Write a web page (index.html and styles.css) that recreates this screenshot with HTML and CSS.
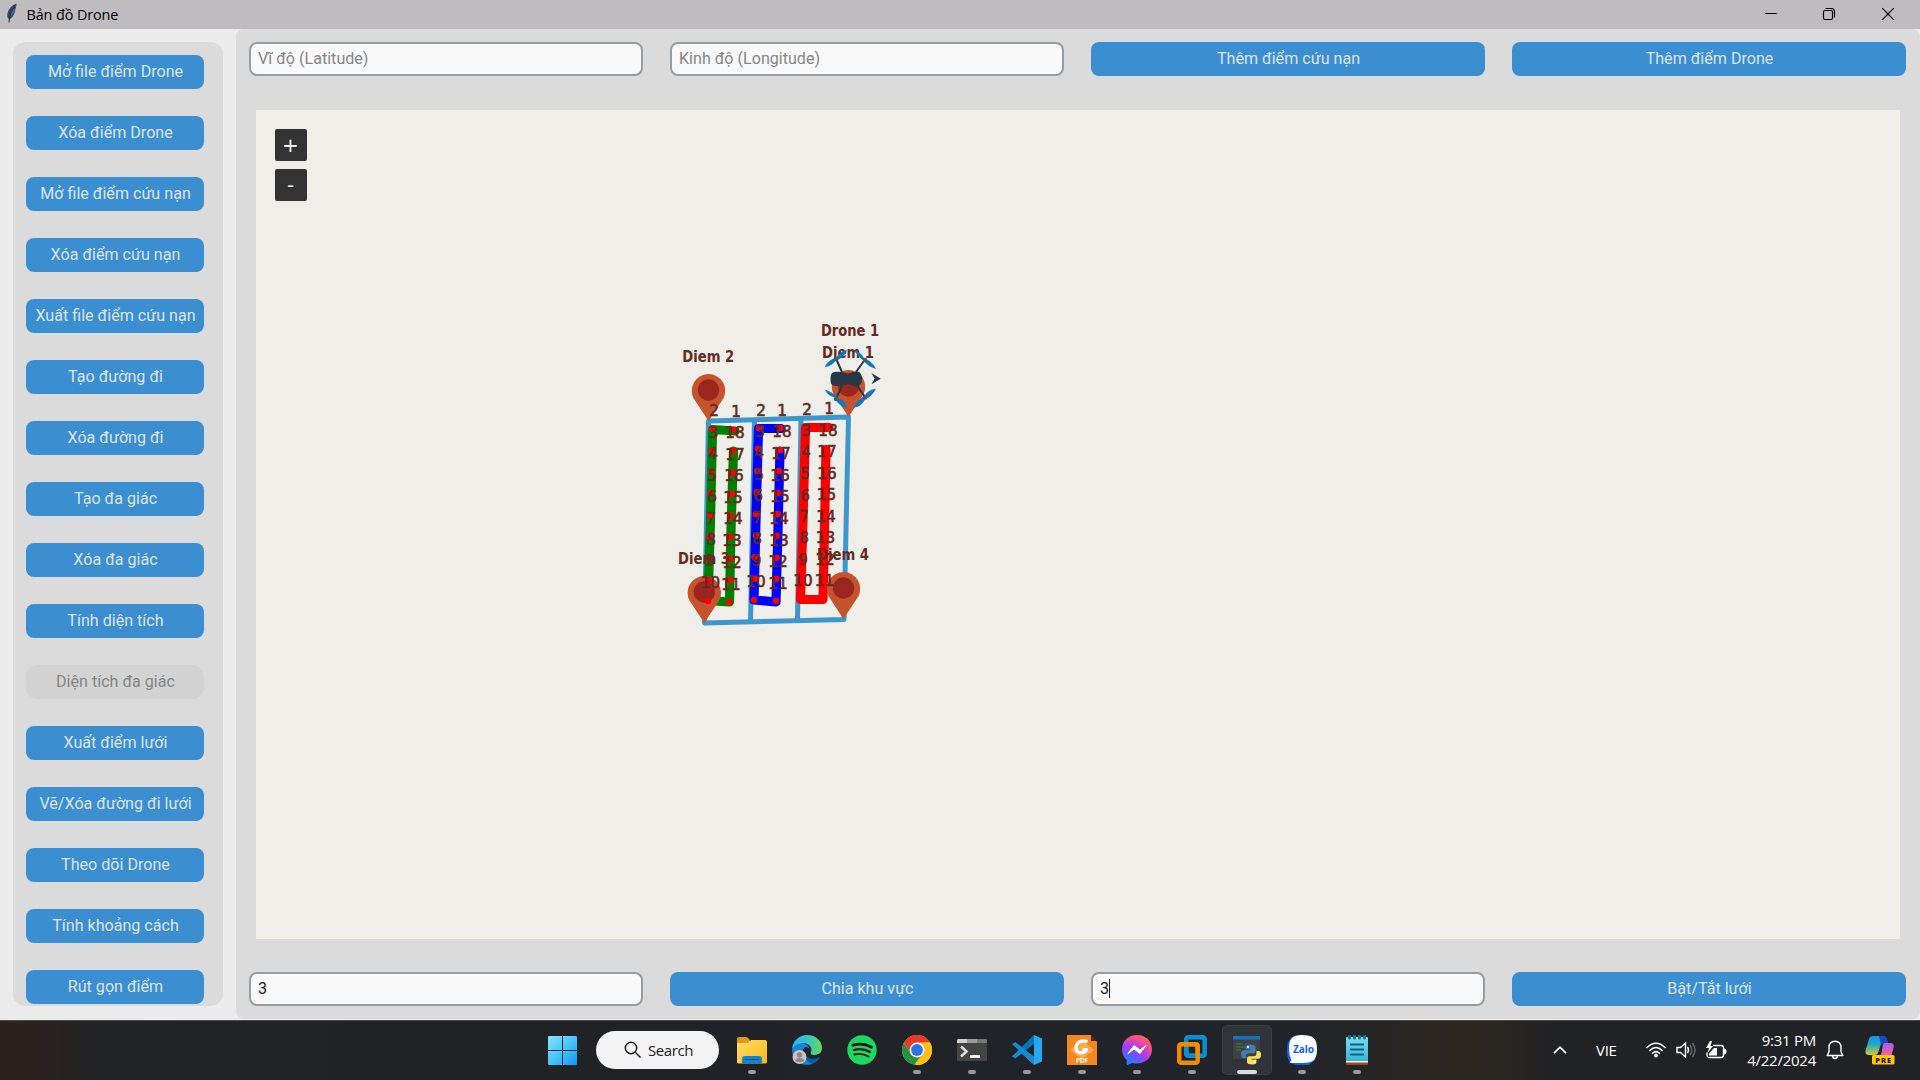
FILE: index.html
```html
<!DOCTYPE html>
<html lang="vi">
<head>
<meta charset="utf-8">
<title>Bản đồ Drone</title>
<link rel="stylesheet" href="styles.css">
</head>
<body>
<header class="titlebar">
  <svg class="feather" width="12" height="22" viewBox="0 0 12 22"><path d="M10.500.8C6.500 1.500 1.500 6.500 1.300 12.500c0 2 .8 3.500 2 3.800 3-1 5-5 5.800-8.500C9.800 5 10.500 3 10.500.8z" fill="#31455f"/><path d="M9.500 3C6 6 4 10 3.600 14.500 6.500 12 8.800 8 9.500 3z" fill="#4b78b5"/><path d="M8.800 4C5 8 3.500 13 3 19.500" stroke="#20242a" fill="none"/></svg>
  <span class="title">Bản đồ Drone</span>
  <div class="controls">
    <svg width="58" height="29" viewBox="0 0 58 29"><path d="M23 13.500h12" stroke="#000"/></svg>
    <svg width="58" height="29" viewBox="0 0 58 29"><g fill="none" stroke="#000" stroke-width="1.200"><rect x="23.500" y="10.500" width="9" height="9" rx="1.500"/><path d="M25.500 8.500h6a3 3 0 0 1 3 3v6"/></g></svg>
    <svg width="60" height="29" viewBox="0 0 60 29"><path d="M24.200 8.200l11.600 11.600M35.800 8.200L24.200 19.800" stroke="#000" stroke-width="1.200"/></svg>
  </div>
</header>
<div class="app">
  <nav class="sidebar">
    <button class="btn">Mở file điểm Drone</button>
    <button class="btn">Xóa điểm Drone</button>
    <button class="btn">Mở file điểm cứu nạn</button>
    <button class="btn">Xóa điểm cứu nạn</button>
    <button class="btn">Xuất file điểm cứu nạn</button>
    <button class="btn">Tạo đường đi</button>
    <button class="btn">Xóa đường đi</button>
    <button class="btn">Tạo đa giác</button>
    <button class="btn">Xóa đa giác</button>
    <button class="btn">Tính diện tích</button>
    <div class="btn area">Diện tích đa giác</div>
    <button class="btn">Xuất điểm lưới</button>
    <button class="btn">Vẽ/Xóa đường đi lưới</button>
    <button class="btn">Theo dõi Drone</button>
    <button class="btn">Tính khoảng cách</button>
    <button class="btn">Rút gọn điểm</button>
  </nav>
  <main class="panel">
    <div class="row">
      <div class="entry hint">Vĩ độ (Latitude)</div>
      <div class="entry hint">Kinh độ (Longitude)</div>
      <button class="btn">Thêm điểm cứu nạn</button>
      <button class="btn">Thêm điểm Drone</button>
    </div>
    <section class="map">
      <svg class="canvas" width="1644" height="829" viewBox="256 110 1644 829">
        <defs>
          <g id="pin"><path d="M0 0L-14.800-22.500A16.700 16.700 0 1 1 14.800-22.500z" fill="#c5542d"/><circle cy="-31" r="10.700" fill="#9b261e"/></g>
        </defs>
        <g class="zone"><path d="M708.500 421L848.500 417 844 619.500 704.500 623z"/><path d="M754.500 420L750.500 622M801 418.500L797.500 620"/></g>
        <path class="route green" d="M733.500 451L731 530 729.500 602 708 600.500 710.500 520 712.500 429.500 735 431"/>
        <path class="route blue" d="M780 451L778 530 776 602 754 600 756 520 758.500 428.500 781 428.500"/>
        <path class="route red" d="M826 449.500L824.500 530 823 599.500 800.500 599.500 803 520 805.500 427.500 829 427.500"/>
        <use href="#pin" x="708.500" y="421"/><use href="#pin" x="848.500" y="417"/><use href="#pin" x="704.300" y="623"/><use href="#pin" x="843.500" y="619"/>
        <path class="dots" d="M712.300 429h0M711.700 451h0M711 472.300h0M710.300 493.300h0M710 515h0M709.300 536.700h0M709 558.300h0M708.300 580h0M708 601h0M733.300 430h0M733 451h0M732.700 472.700h0M731.700 494h0M731 516h0M730.700 536.700h0M730 559h0M730 580h0M729 602h0M759 428h0M758 448.700h0M757.300 471h0M756.700 492.300h0M756 514h0M756 535.300h0M754.700 557h0M755 578.700h0M754 600h0M780.300 428h0M780 450h0M778.700 471h0M777.700 493h0M777.700 514h0M776.700 536h0M776.700 558h0M776 579h0M776 600.700h0M826.300 449h0M822.700 555h0"/>
        <g class="label">
          <text x="708.300" y="362" textLength="52" lengthAdjust="spacingAndGlyphs">Diem 2</text>
          <text x="850" y="336" textLength="58" lengthAdjust="spacingAndGlyphs">Drone 1</text>
          <text x="848" y="358" textLength="52" lengthAdjust="spacingAndGlyphs">Diem 1</text>
          <text x="704" y="564" textLength="52" lengthAdjust="spacingAndGlyphs">Diem 3</text>
          <text x="843" y="560" textLength="52" lengthAdjust="spacingAndGlyphs">Diem 4</text>
        </g>
        <g class="num">
          <text x="714" y="416">2</text><text x="713.500" y="438">3</text><text x="713" y="459">4</text><text x="712" y="481">5</text><text x="712" y="502">6</text><text x="711" y="523.500">7</text><text x="711" y="544.500">8</text><text x="710" y="566">9</text><text x="710.500" y="588">10</text>
          <text x="736" y="417">1</text><text x="735" y="438">18</text><text x="735" y="459.500">17</text><text x="734" y="481">16</text><text x="733" y="503">15</text><text x="733" y="524">14</text><text x="732" y="546">13</text><text x="732" y="567.500">12</text><text x="731" y="589.500">11</text>
          <text x="761" y="415.500">2</text><text x="760" y="436.500">3</text><text x="759" y="458">4</text><text x="759" y="479.500">5</text><text x="758" y="501">6</text><text x="757" y="522.500">7</text><text x="757" y="544">8</text><text x="756.500" y="566">9</text><text x="756" y="587">10</text>
          <text x="782" y="416">1</text><text x="782" y="437">18</text><text x="781" y="458.500">17</text><text x="780" y="480.500">16</text><text x="780" y="502">15</text><text x="779" y="523.500">14</text><text x="779" y="545.500">13</text><text x="778" y="567">12</text><text x="778" y="588.500">11</text>
          <text x="807" y="414.500">2</text><text x="806" y="436">3</text><text x="806" y="457">4</text><text x="805" y="478.500">5</text><text x="805" y="500.500">6</text><text x="804" y="521.500">7</text><text x="804" y="543">8</text><text x="803" y="565">9</text><text x="803" y="586">10</text>
          <text x="829" y="414">1</text><text x="828" y="435.500">18</text><text x="827" y="457">17</text><text x="827" y="479">16</text><text x="826.500" y="500">15</text><text x="826" y="521.500">14</text><text x="825.500" y="543">13</text><text x="825" y="565">12</text><text x="824.500" y="586">11</text>
        </g>
        <g class="drone">
          <path d="M836 358.500L842 372M865 359.500L856 372M836 398.500L843 384M865 397L856 384" stroke="#263745" stroke-width="2"/>
          <g fill="#0d78c2" stroke="#0d78c2" stroke-width=".5"><path d="M836 360Q833 365 825.300 367 826 362 836 357.500zM836 359Q839 352 846.500 350.500 846 355 836 361zM865 360Q861 352 854.500 350.500 857 355 864 361zM864.500 359Q872 361 875.500 368.500 869 367 864 361zM836 397.500Q828 396 825.300 390 831 391.500 837 397zM835.500 399Q839 406 847 407.500 845 401 837 397.500zM865 399Q862 406 854 407.500 857 401 864 396zM864 397.500Q867 390 875.500 389 873 395 866 399z"/></g>
          <g fill="#4a5a66"><circle cx="836" cy="359" r="2.200"/><circle cx="865" cy="360" r="2.200"/><circle cx="836" cy="399" r="2.200"/><circle cx="865" cy="397.500" r="2.200"/></g>
          <path d="M834 372Q842 371 846 373 849 374 853 372L858 371.500Q862 373 862 379 862 385 857 386.500L851 385Q848 383.500 844 385 838 386.500 833 385.500 830.500 384.500 830.500 379 830.500 372.500 834 372z" fill="#263745"/>
          <path d="M871.500 373L880.800 378.700 871.500 384.300 874.500 378.700z" fill="#263745"/>
        </g>
      </svg>
      <div class="zoom"><button>+</button><button>-</button></div>
    </section>
    <div class="row">
      <div class="entry">3</div>
      <button class="btn">Chia khu vực</button>
      <div class="entry">3<i class="caret"></i></div>
      <button class="btn">Bật/Tắt lưới</button>
    </div>
  </main>
</div>
<footer class="taskbar">
  <svg class="start" width="29" height="29" viewBox="0 0 29 29"><defs><linearGradient id="win" x1="0" y1="0" x2="29" y2="29" gradientUnits="userSpaceOnUse"><stop stop-color="#8ce3ff"/><stop offset=".55" stop-color="#3fc1fc"/><stop offset="1" stop-color="#0a95fa"/></linearGradient></defs><path d="M1 0h13v14H0V1q0-1 1-1zM15 0h13q1 0 1 1v13H15zM0 15h14v14H1q-1 0-1-1zM15 15h14v13q0 1-1 1H15z" fill="url(#win)"/></svg>
  <div class="search"><svg width="18" height="18" viewBox="0 0 18 18" fill="none" stroke="#1b1b1b" stroke-width="1.500"><circle cx="7" cy="7" r="5.700"/><path d="M11.200 11.200l5.300 5.300"/></svg><span>Search</span></div>
  <div class="apps">
    <div class="slot on"><svg viewBox="0 0 30 30"><defs><linearGradient id="fold" x1="0" y1="0" x2="1" y2="1"><stop stop-color="#ffdc6c"/><stop offset="1" stop-color="#fcb912"/></linearGradient></defs><path d="M0 4q0-2 2-2h7q1 0 2 1l2 2v4H0z" fill="#dd9a0b"/><path d="M0 8h9q2 0 4-2l1-1h14q2 0 2 2v20q0 1.500-1.500 1.500h-27Q0 28.500 0 27z" fill="url(#fold)"/><path d="M5 28.500V24q0-3 3-3h14q3 0 3 3v4.500z" fill="#1283d2"/><path d="M8 24.500h14" stroke="#075795"/></svg></div>
    <div class="slot"><svg viewBox="0 0 30 30"><defs><linearGradient id="edge"><stop stop-color="#2bb2ef"/><stop offset=".5" stop-color="#34c5cb"/><stop offset="1" stop-color="#68d851"/></linearGradient></defs><path d="M0 15a15 15 0 0 0 24 12q3-2 4-5-5 3-11 1-6-3-6-8Q5 10 0 15z" fill="#0c59a4"/><path d="M0 15Q2 7 10 8q7 1 8 7-1-3-4-3-4 1-3 6 1 7 9 11-12 2-17-5-3-4-3-9z" fill="#1685db"/><path d="M0 14C1 5 8 0 15 0c9 0 15 6 15 13 0 5-4 7-8 7-3 0-4-1-3-3 2-5-3-9-8-9Q4 8 0 14z" fill="url(#edge)"/><circle cx="7.500" cy="22" r="7" fill="#c9c5c2"/><circle cx="7.500" cy="20" r="2.700" fill="#8c8784"/><path d="M3 26q0-3 4.500-3T12 26q-4 2.500-9 0z" fill="#8c8784"/></svg></div>
    <div class="slot"><svg viewBox="0 0 30 30"><circle cx="15" cy="15" r="14.700" fill="#1ed760"/><g fill="none" stroke="#15191a" stroke-linecap="round"><path d="M6 10.200q10-3 18.500 2" stroke-width="2.800"/><path d="M7 15q8.500-2.500 16 2" stroke-width="2.300"/><path d="M7.500 19.500q7.500-2 14 2" stroke-width="1.900"/></g></svg></div>
    <div class="slot on"><svg viewBox="0 0 30 30"><circle cx="15" cy="15" r="15" fill="#fbc116"/><path d="M2 7.500A15 15 0 0 1 28 7.500H15L8.500 18.700z" fill="#e33b2e"/><path d="M2 7.500L8.500 18.700q2.500 4 7 3.700L12 29.700A15 15 0 0 1 2 7.500z" fill="#229342"/><path d="M12 29.700L21 18.700 15 15 9 19z" fill="#229342"/><path d="M14 30l7.500-11.500V7.500H28A15 15 0 0 1 14 30z" fill="#fbc116"/><circle cx="15" cy="15" r="7.500" fill="#fff"/><circle cx="15" cy="15" r="5.900" fill="#2b73e8"/></svg></div>
    <div class="slot on"><svg viewBox="0 0 30 30"><rect y="4" width="30" height="22" rx="1.500" fill="#444"/><path d="M0 8V5.500Q0 4 1.500 4H10v4z" fill="#d0d0d0"/><path d="M10 4h10v4H10z" fill="#999"/><path d="M20 4h8.500Q30 4 30 5.500V8H20z" fill="#777"/><path d="M4 11.500l5.500 5-5.500 5" fill="none" stroke="#ddd" stroke-width="2.600"/><path d="M13 21.500h10" stroke="#fff" stroke-width="2.800"/></svg></div>
    <div class="slot on"><svg viewBox="0 0 30 30"><path d="M22 0L9.500 12 3.500 7.300 0 9l7 6.500L0 21l3.500 2.500L22 9z" fill="#0873b8"/><path d="M22 30L9.500 18.500l-6 4.700L0 21.500 7 15 0 9l3.500-1.700L22 21.500z" fill="#148bd3"/><path d="M22 0l8 3.500v23L22 30z" fill="#28a8f1"/></svg></div>
    <div class="slot on"><svg viewBox="0 0 30 30"><path d="M0 0h23.500L30 6.500V30H0z" fill="#f9861b"/><path d="M15 5l12 10-12 9L3 15z" fill="#fba852"/><path d="M24 0v6h6z" fill="#3a2b20"/><path d="M20.500 6.500C13 4.500 9 8 9 13c0 6 8.500 6.500 10.500 1.500h-4" fill="none" stroke="#fff" stroke-width="3.200" stroke-linejoin="round"/><text x="15" y="27.500" class="pdf" textLength="12">PDF</text></svg></div>
    <div class="slot on"><svg viewBox="0 0 30 30"><defs><radialGradient id="msg" cx=".2" cy="1" r="1.100"><stop stop-color="#0a88ff"/><stop offset=".55" stop-color="#9a3efb"/><stop offset=".85" stop-color="#fb4b8b"/><stop offset="1" stop-color="#ff6968"/></radialGradient></defs><path d="M15 0c8.500 0 15 6.200 15 14.300S23.500 28.500 15 28.500q-2.500 0-4.500-.6L5.500 30q-.8 0-.8-1v-3.700Q0 21 0 14.300C0 6.200 6.500 0 15 0z" fill="url(#msg)"/><path d="M6 18.500l6-8 6 4.500 6-4.500-6 8-6-4.500z" fill="#fff" stroke="#fff" stroke-linejoin="round"/></svg></div>
    <div class="slot on"><svg viewBox="0 0 30 30" fill="none" stroke-width="4.500"><rect x="9.200" y="2.200" width="18.500" height="18.500" rx="2" stroke="#0790d4"/><rect x="2.200" y="9.200" width="18.500" height="18.500" rx="2" stroke="#f38b00"/><path d="M9.200 12v5q0 3.700 3.700 3.700h5" stroke="#0790d4"/><path d="M7 9.200h11.700q2 0 2 2V19" stroke="#f38b00"/></svg></div>
    <div class="slot on active"><svg viewBox="0 0 30 30"><path d="M1 1h27v23H1z" fill="#3e4144"/><path d="M1 1h27v3.500H1z" fill="#1273bb"/><path d="M4 9h7M13 9h2M4 12h9M4 15h5" stroke="#2d8b3b"/><path d="M17.500 9.500q-4 0-4 2.500v2.500h5v.8H12q-3 0-3 4t3 4h2v-2.500q0-2.500 3-2.500h4q2.500 0 2.500-2.500V12q0-2.500-6-2.500z" fill="#437fb0"/><path d="M20.500 29.500q4 0 4-2.500v-2.500h-5v-.8h6.500q3 0 3-4t-3-3.700h-1.500v2.700q0 2.500-3 2.500h-4q-2.500 0-2.500 2.500V27q0 2.500 5.500 2.500z" fill="#ffdf58"/><circle cx="16" cy="12" r="1" fill="#fff"/><circle cx="22.500" cy="27" r="1" fill="#fff"/></svg></div>
    <div class="slot on"><svg viewBox="0 0 30 30"><path d="M8 1Q0 3 0 14c0 9 1 15 10 16h12l6-5z" fill="#0866eb"/><path d="M15 0c11 0 15 3 15 14s-4 14-14 14H5q-3 0-2-1 2-1 1-3-2-4-2-10C2 4 5 0 15 0z" fill="#fff"/><text class="zalo" x="16.500" y="17.500" textLength="21">Zalo</text></svg></div>
    <div class="slot on"><svg viewBox="0 0 30 30"><defs><linearGradient id="note" x1="0" y1="0" x2="0" y2="1"><stop stop-color="#7fdaf2"/><stop offset="1" stop-color="#35b7d9"/></linearGradient></defs><path d="M4 25h22v4q0 1-1 1H5q-1 0-1-1z" fill="#a5470c"/><path d="M4 25h22v2.500H4z" fill="#f3f3f3"/><path d="M4 3q0-1 1-1h20q1 0 1 1v23H4z" fill="url(#note)"/><path d="M8 9.500h14M8 14.500h14M8 19.500h14" stroke="#096284" stroke-width="1.800"/><path d="M7.500 1v2M12.500 1v2M17.500 1v2M22.500 1v2" stroke="#0d7894" stroke-width="3" stroke-linecap="round"/></svg></div>
  </div>
  <div class="tray">
    <svg class="chev" width="16" height="10" viewBox="0 0 16 10"><path d="M2 8.200l6-6 6 6" fill="none" stroke="#fff" stroke-width="1.800"/></svg>
    <span class="lang">VIE</span>
    <svg class="wifi" width="20" height="16" viewBox="0 0 20 16" fill="none" stroke="#fff" stroke-width="1.500" stroke-linecap="round"><path d="M1 5.500q9-8.500 18 0M3.800 8.500q6.200-6 12.400 0M6.500 11.300q3.500-3.300 7 0"/><circle cx="10" cy="13.500" r="1.200" fill="#fff"/></svg>
    <svg class="sound" width="21" height="18" viewBox="0 0 21 18" fill="none" stroke-width="1.400"><path d="M1 6.500h3.500L9.500 2v14l-5-4.500H1zM11.500 6q2 3 0 6" stroke="#fff"/><path d="M14 4q3.500 5 0 10M16.500 2q5 7 0 14" stroke="#68696b"/></svg>
    <svg class="battery" width="21" height="19" viewBox="0 0 21 19"><path d="M7 4.500h8q2.500 0 2.500 2.500v7q0 2.500-2.500 2.500H3.500Q1 16.500 1 14v-2.500" fill="none" stroke="#fff" stroke-width="1.400"/><path d="M18 7.500q2.500 0 2.500 3t-2.500 3z" fill="#fff"/><path d="M8 7h3v7.500H3V12.500z" fill="#fff"/><path d="M4 0L0 7h3L1.500 12 7 5H4.500L6 0z" fill="#fff"/></svg>
    <div class="clock"><span>9:31 PM</span><span>4/22/2024</span></div>
    <svg class="bell" width="18" height="20" viewBox="0 0 18 20" fill="none" stroke="#fff" stroke-width="1.400" stroke-linejoin="round"><path d="M9 1.200c-4 0-6 3-6 6v4.500L1.200 15.500h15.600L15 11.700V7.200c0-3-2-6-6-6zM6.500 16q.5 2.500 2.500 2.500t2.500-2.500"/></svg>
    <svg class="copilot" width="30" height="30" viewBox="0 0 30 30"><defs><linearGradient id="c1" x1="0" y1="0" x2="0" y2="1"><stop stop-color="#1695ef"/><stop offset=".45" stop-color="#20a9c8"/><stop offset="1" stop-color="#dccb28"/></linearGradient><linearGradient id="c2" x1="0" y1="0" x2="0" y2="1"><stop stop-color="#a55df3"/><stop offset="1" stop-color="#fb638a"/></linearGradient></defs><path d="M8 1h10q3 0 4 4l1 3h-4q-3 0-4 4l-2 6q-1 2-3 2H4q-5 0-3-6L4 4q1-3 4-3z" fill="url(#c1)"/><path d="M14 1h4q3 0 4 4l1 3h-4q-2 0-3 2z" fill="#174bc0"/><path d="M19 8h6q5 0 3.500 5L26 22H13q3-1 3.500-4l1-6q.5-4 1.500-4z" fill="url(#c2)"/><rect x="7" y="20" width="22.500" height="9.500" rx="1.500" fill="#ffc60b"/><text class="pre" x="18.200" y="27.500" textLength="16">PRE</text></svg>
  </div>
</footer>
</body>
</html>
```
FILE: styles.css
```css
* { box-sizing: border-box; }
body { margin: 0; width: 1920px; height: 1080px; overflow: hidden; display: flex; flex-direction: column; background: #ebebeb; font-family: Roboto, sans-serif; }
svg { display: block; flex: none; }
button { border: 0; padding: 0; font-family: inherit; }

.titlebar { height: 29px; flex: none; display: flex; align-items: center; background: #bfbcbf; color: #000; font: 14.400px/29px "Open Sans", "Noto Sans", sans-serif; }
.feather { margin: 0 8.500px 2px 6px; }
.title { letter-spacing: -.1px; }
.controls { display: flex; margin-left: auto; padding-right: 2px; }

.app { height: 991px; flex: none; display: flex; padding: 0 0 1px 13px; }
.sidebar { width: 210px; height: 964px; margin: 13px 13px 0 0; padding: 13px 19px 0 13px; border-radius: 12px; background: #dbdbdb; display: flex; flex-direction: column; gap: 27px; }
.btn { flex: none; height: 34px; padding: 0 0 1px 1px; border-radius: 8px; background: #3b8ed0; color: #dce4ee; font-size: 16.100px; line-height: 33px; text-align: center; white-space: nowrap; }
.area { background: #d3d3d3; color: #858585; border-radius: 12px; line-height: 34px; }
.panel { flex: 1; padding: 13px 14px 13px 13px; border-radius: 8px; background: #dbdbdb; display: flex; flex-direction: column; justify-content: space-between; }
.row { display: grid; grid-template-columns: repeat(4, 394px); column-gap: 27px; }
.entry { height: 34px; display: flex; align-items: center; padding: 0 7px 1px; border: 2px solid #979da2; border-radius: 8px; background: #f9f9fa; color: #1a1a1a; font-size: 16.100px; }
.hint { color: #858585; }
.caret { width: 1px; height: 19px; background: #222; }
.map { position: relative; width: 1644px; height: 829px; margin-left: 7px; background: #f0eee8; }
.zoom { position: absolute; left: 19px; top: 19px; display: flex; flex-direction: column; gap: 8px; }
.zoom button { width: 32px; height: 32px; padding-right: 1px; border-radius: 2px; background: #333; color: #fff; font: 20px/32px "DejaVu Sans", sans-serif; }

.zone { fill: none; stroke: #3e97cc; stroke-width: 5; stroke-linejoin: round; }
.route { fill: none; stroke-width: 9.200; stroke-linecap: round; stroke-linejoin: round; }
.green { stroke: #008000; }
.blue { stroke: #00f; }
.red { stroke: #f00; }
.dots { stroke: #f00; stroke-width: 6.600; stroke-linecap: round; }
.label, .num { fill: #652a22; text-anchor: middle; font-family: "DejaVu Sans", sans-serif; font-stretch: condensed; font-size: 15.200px; font-weight: 700; }
.num { font-weight: 400; font-stretch: normal; stroke: #652a22; stroke-width: .6; }

.taskbar { height: 60px; flex: none; display: flex; align-items: center; padding-bottom: 1px; border-top: 1px solid #4b4b4c; background: linear-gradient(90deg, #2d211e 0, #292220 50px, #222326 100px, #202226 600px, #20242a 1280px, #2c2620 1460px, #292521 1510px, #212226 1560px); color: #fff; font-family: "Open Sans", "Noto Sans", sans-serif; }
.start { margin-left: 548px; }
.search { width: 123px; height: 38px; margin-left: 19px; padding-left: 28px; border-radius: 19px; background: #f3f3f3; color: #1b1b1b; display: flex; align-items: center; gap: 6px; font-size: 15px; letter-spacing: -.4px; }
.apps { display: flex; gap: 5px; margin-left: 8px; }
.slot { width: 50px; height: 50px; position: relative; padding: 10px; border-radius: 5px; }
.slot svg { width: 30px; height: 30px; }
.slot.on::after { content: ""; position: absolute; left: 21px; bottom: 1px; width: 8px; height: 4px; border-radius: 2px; background: #999; }
.slot.active { background: #30343a; border: 1px solid #3b3e43; padding: 9px; }
.slot.active::after { left: 14px; bottom: 0; width: 20px; background: #dcdcdc; }
.pdf { fill: #fff; text-anchor: middle; font: 700 6.500px "Open Sans", sans-serif; }
.zalo { fill: #0866eb; text-anchor: middle; font: 700 10px "Open Sans", sans-serif; }
.pre { fill: #241a00; text-anchor: middle; font: 800 7.500px "Open Sans", sans-serif; }
.tray { display: flex; align-items: center; margin-left: auto; padding-right: 25px; }
.lang { width: 23px; margin-left: 28px; font-size: 15px; letter-spacing: -.3px; }
.wifi { margin-left: 27px; }
.sound { margin-left: 10px; }
.battery { margin-left: 9px; }
.clock { width: 80px; margin: 0 10px 0 9px; display: flex; flex-direction: column; align-items: flex-end; font-size: 15px; line-height: 20px; letter-spacing: -.25px; white-space: nowrap; }
.copilot { margin-left: 21px; }
```
